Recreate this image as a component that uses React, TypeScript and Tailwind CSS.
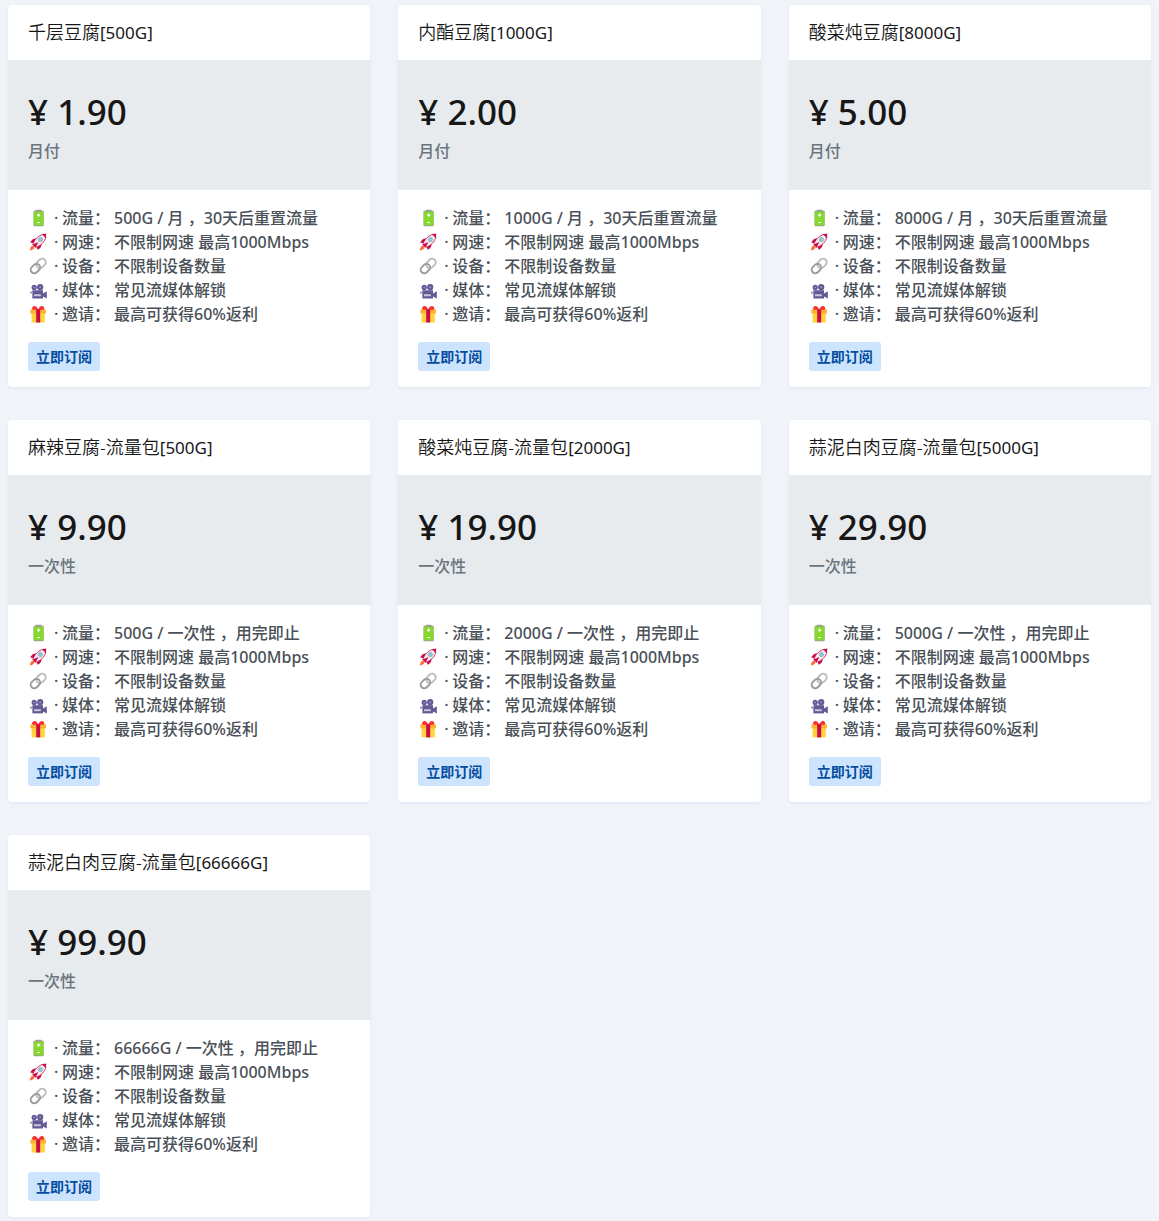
import React from 'react'

const plans = [
  { name: '千层豆腐', size: '500G', price: '1.90', period: '月付' },
  { name: '内酯豆腐', size: '1000G', price: '2.00', period: '月付' },
  { name: '酸菜炖豆腐', size: '8000G', price: '5.00', period: '月付' },
  { name: '麻辣豆腐-流量包', size: '500G', price: '9.90', period: '一次性' },
  { name: '酸菜炖豆腐-流量包', size: '2000G', price: '19.90', period: '一次性' },
  { name: '蒜泥白肉豆腐-流量包', size: '5000G', price: '29.90', period: '一次性' },
  { name: '蒜泥白肉豆腐-流量包', size: '66666G', price: '99.90', period: '一次性' },
]

type Plan = (typeof plans)[number]

function Battery() {
  return (
    <svg viewBox="0 0 18 18" className="size-[18px]" aria-hidden="true">
      <rect x="6.6" y="0.8" width="6" height="2" rx="0.5" fill="#9b9b9b" />
      <rect x="4.6" y="1.8" width="10" height="15.4" rx="0.8" fill="#9b9b9b" />
      <rect x="4.6" y="2.6" width="10" height="13.8" fill="#86d72f" />
      <path d="M9.6 4.6v3.2M8 6.2h3.2M8.2 13.5H11" stroke="#fff" strokeWidth="1.2" />
    </svg>
  )
}

function Rocket() {
  return (
    <svg viewBox="0 0 18 18" className="size-[18px]" aria-hidden="true">
      <path d="M7.6 5.6C5 5 2.6 6.6 1.2 9.6l4 .6zM12.4 10.4c.6 2.6-1 5-4 6.4l-.6-4z" fill="#ca0b4a" />
      <path d="M4.2 12.6c-2 .2-2.8 1.8-3.4 4.8 3-.6 4.6-1.4 4.8-3.4z" fill="#ff6d3b" />
      <path d="M3.8 11.4C5.4 6.4 9.4 2.4 14.4 1.2l2.6 2.5c-1.2 5.2-5.2 9.2-10.4 10.6z" fill="#f0ecf1" stroke="#ca0b4a" strokeWidth="0.8" />
      <path d="M12.6 1.6 17.4.6l-1 4.8c-1-1.8-2-2.8-3.8-3.8z" fill="#ca0b4a" />
      <path d="m3.6 11.4 3 3L9.4 9z" fill="#ca0b4a" />
      <circle cx="11.4" cy="6.6" r="2" fill="#81d0ee" stroke="#9b9b9b" strokeWidth="0.8" />
    </svg>
  )
}

function Link() {
  return (
    <svg viewBox="0 0 18 18" className="size-[18px]" fill="none" strokeWidth="1.9" aria-hidden="true">
      <rect x="6.8" y="2.8" width="10.4" height="7.2" rx="3.6" transform="rotate(-45 12 6.4)" stroke="#bdbdbd" />
      <rect x="1.2" y="8" width="10.4" height="7.2" rx="3.6" transform="rotate(-45 6.4 11.6)" stroke="#9b9b9b" />
    </svg>
  )
}

function Camera() {
  return (
    <svg viewBox="0 0 18 18" className="size-[18px]" aria-hidden="true">
      <circle cx="5.2" cy="6.4" r="2.6" fill="#635994" />
      <circle cx="11.2" cy="6.2" r="3.1" fill="#635994" />
      <circle cx="5.2" cy="6.4" r="0.9" fill="#998ec3" />
      <circle cx="11.2" cy="6.2" r="1" fill="#998ec3" />
      <path d="M3.4 9.2h10.6v8.2H3.4z" fill="#635994" />
      <path d="M1 10.8h2.8v1.8H1z" fill="#998ec3" />
      <path d="M14 12.4 17.8 10.2v7.2L14 15.6z" fill="#635994" />
      <path d="M5 13.2h6.8v2H5z" fill="#cdc4d6" />
    </svg>
  )
}

function Gift() {
  return (
    <svg viewBox="0 0 18 18" className="size-[18px]" aria-hidden="true">
      <path d="M2.6 8h13.2v9.4H2.6z" fill="#ffd33b" />
      <path d="M1.4 4.4h15.6v4H1.4z" fill="#ffb02e" />
      <path d="M9.2 4.4C7.6 1 5.6.6 4.2 1.4 2.8 2.2 2.8 3.8 3.6 4.8L9.2 5zM9.2 4.4c1.6-3.4 3.6-3.8 5-3 1.4.8 1.4 2.4.6 3.4L9.2 5z" fill="#f8312f" />
      <path d="M7.2 4.4h4v13h-4z" fill="#ca0b4a" />
    </svg>
  )
}

function Feature({ icon, label, children }: { icon: React.ReactNode; label: string; children: React.ReactNode }) {
  return (
    <li className="flex items-center whitespace-nowrap">
      <span className="w-[26px] pl-px">{icon}</span>
      <span className="w-2">·</span>
      <span className="w-[52px]">{label}：</span>
      <span>{children}</span>
    </li>
  )
}

function PlanCard({ plan }: { plan: Plan }) {
  return (
    <article className="overflow-hidden rounded bg-white shadow-[0_1px_3px_#dfe5f2]">
      <h3 className="px-5 py-4 text-[18px] leading-[23px] font-[350] text-[#171717]">
        {plan.name}
        <span className="text-[17px] font-normal">[{plan.size}]</span>
      </h3>
      <div className="bg-[#e7ebee] px-5 pt-[29px] pb-[27px]">
        <p className="mb-[5px] text-[35px] leading-[45px] font-medium text-[#171717]">¥ {plan.price}</p>
        <p className="leading-6 font-medium text-[#6c757d]">{plan.period}</p>
      </div>
      <div className="px-5 py-4">
        <ul className="mb-4 leading-6 font-medium text-[#495057]">
          <Feature icon={<Battery />} label="流量">
            {plan.period === '月付'
              ? `${plan.size} / 月 ，30天后重置流量`
              : `${plan.size} / 一次性 ，用完即止`}
          </Feature>
          <Feature icon={<Rocket />} label="网速">不限制网速 最高1000Mbps</Feature>
          <Feature icon={<Link />} label="设备">不限制设备数量</Feature>
          <Feature icon={<Camera />} label="媒体">常见流媒体解锁</Feature>
          <Feature icon={<Gift />} label="邀请">最高可获得60%返利</Feature>
        </ul>
        <button type="button" className="block rounded-[3px] bg-[#cde4fe] px-2 py-1 text-sm leading-[21px] font-semibold text-[#054d9e]">
          立即订阅
        </button>
      </div>
    </article>
  )
}

export default function App() {
  return (
    <main lang="zh-CN" className="min-h-screen bg-[#f0f3f8] px-2 pt-[5px] pb-1 font-['Noto_Sans','Noto_Sans_CJK_SC',sans-serif]">
      <div className="grid grid-cols-3 gap-x-7 gap-y-[33px]">
        {plans.map((plan) => (
          <PlanCard key={plan.name + plan.size} plan={plan} />
        ))}
      </div>
    </main>
  )
}
